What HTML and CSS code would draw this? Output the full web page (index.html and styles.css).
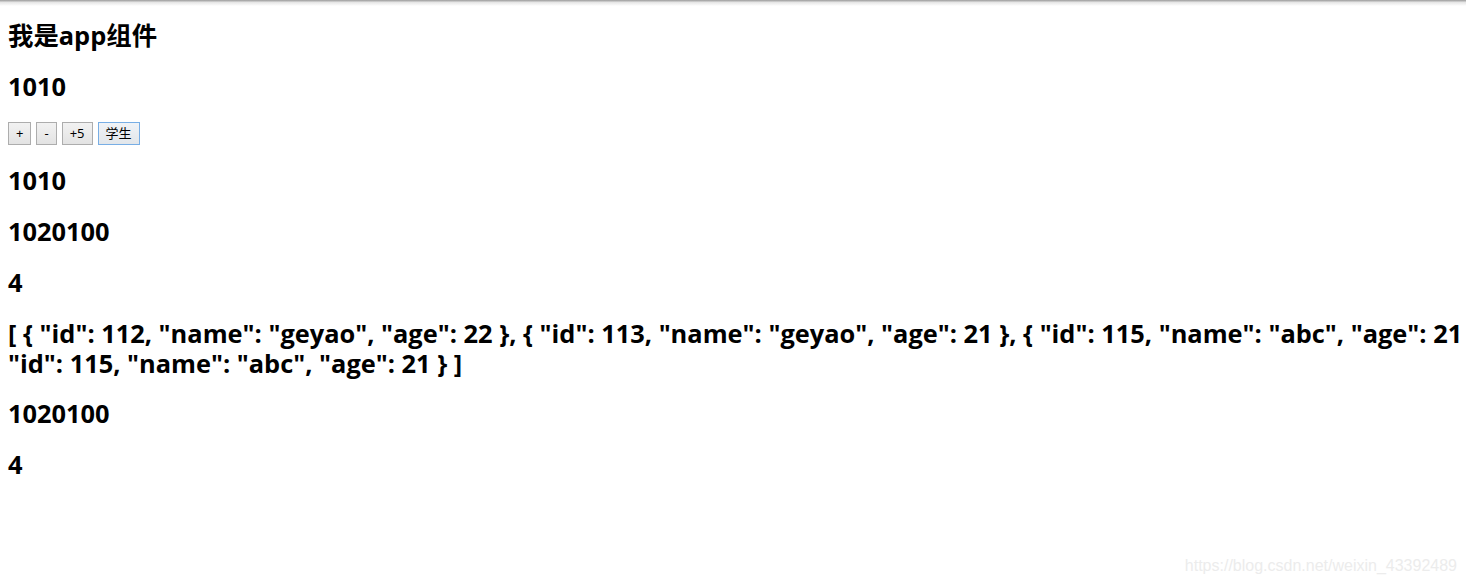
FILE: index.html
```html
<!DOCTYPE html>
<html lang="zh-CN">
<head>
<meta charset="utf-8">
<title>app</title>
<link rel="stylesheet" href="styles.css">
</head>
<body>
<div class="topshade"></div>
<div id="app" class="app">
  <h3 class="line">我是app组件</h3>
  <h3 class="line">1010</h3>
  <div class="btns">
    <button class="btn">+</button>
    <button class="btn">-</button>
    <button class="btn">+5</button>
    <button class="btn btn-focus">学生</button>
  </div>
  <h3 class="line">1010</h3>
  <h3 class="line">1020100</h3>
  <h3 class="line">4</h3>
  <h3 class="line json">[ { "id": 112, "name": "geyao", "age": 22 }, { "id": 113, "name": "geyao", "age": 21 }, { "id": 115, "name": "abc", "age": 21 }, { "id": 115, "name": "abc", "age": 21 } ]</h3>
  <h3 class="line">1020100</h3>
  <h3 class="line">4</h3>
</div>
<div class="watermark">https://blog.csdn.net/weixin_43392489</div>
</body>
</html>
```
FILE: styles.css
```css
html, body {
  margin: 0;
  padding: 0;
  background: #fff;
  overflow: hidden;
  height: 100%;
}
body {
  font-family: "Open Sans", "Noto Sans CJK SC", sans-serif;
  color: #000;
  position: relative;
}
.topshade {
  position: absolute;
  left: 0;
  right: 0;
  top: 0;
  height: 6px;
  background: linear-gradient(#9a9a9a, #e6e6e6 40%, #fff);
}
.app {
  padding: 0 0 0 8px;
  width: 1540px;
}
.line {
  font-size: 25.4px;
  line-height: 31px;
  font-weight: 700;
  margin: 20px 0;
}
.json {
  line-height: 30px;
}
.btns {
  display: flex;
  gap: 5px;
  height: 23px;
}
.btn {
  font-family: "Noto Sans", "Noto Sans CJK SC", sans-serif;
  font-size: 13px;
  height: 23px;
  padding: 0 7px;
  background: linear-gradient(#f2f2f2, #e3e3e3);
  border: 1px solid #adadad;
  border-radius: 0;
  color: #000;
  line-height: 21px;
}
.btn-focus {
  border-color: #78aee5;
  background: linear-gradient(#f0f3f7, #e2e6ea);
}
.watermark {
  position: absolute;
  right: 9px;
  top: 557px;
  font-family: "Liberation Sans", sans-serif;
  font-size: 16px;
  color: #ececec;
}
```
